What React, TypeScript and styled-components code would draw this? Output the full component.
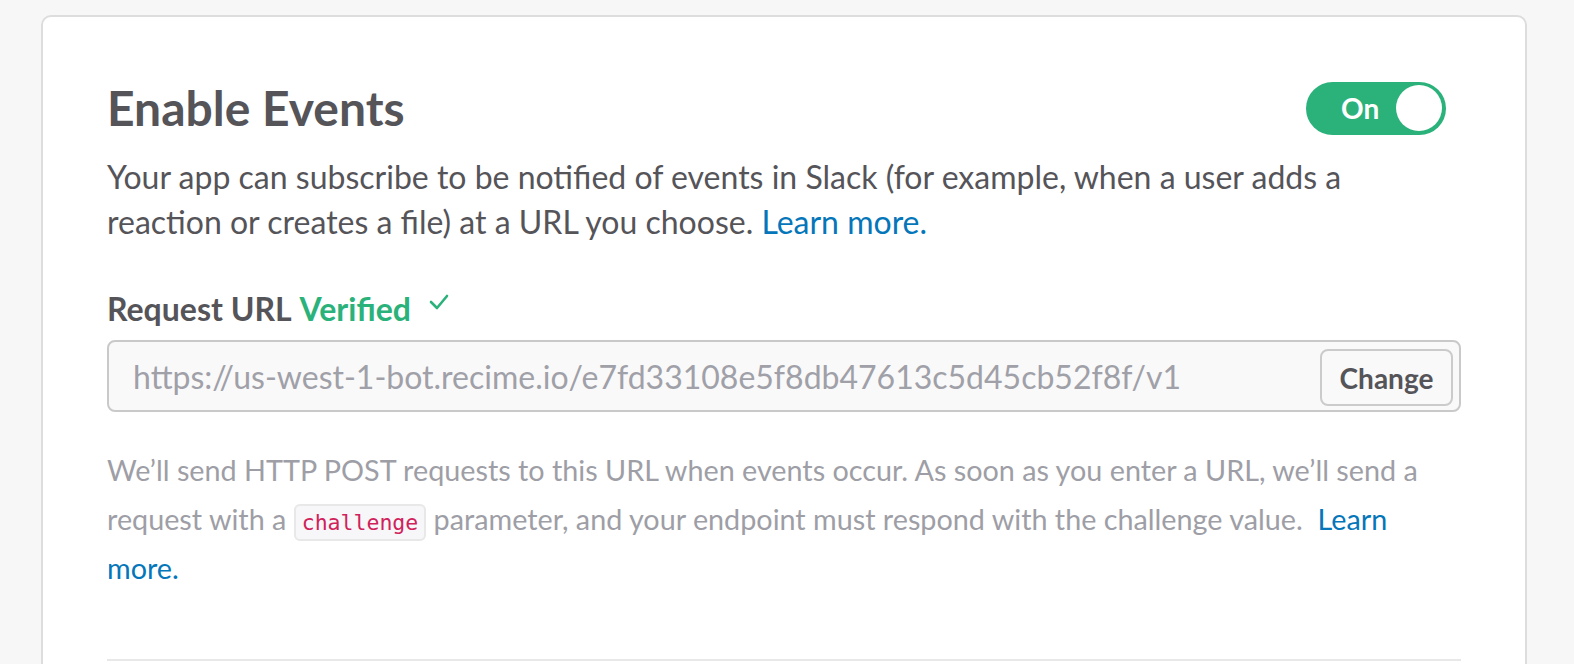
import React from "react";
import styled, { createGlobalStyle } from "styled-components";

const Global = createGlobalStyle`
  html, body { margin: 0; padding: 0; background: #f7f7f7; }
  body { font-family: Lato, "Open Sans", sans-serif; -webkit-font-smoothing: antialiased; }
  * { box-sizing: border-box; }
`;

const Page = styled.div`
  padding: 15px 47px 0 41px;
  height: 664px;
  overflow: hidden;
`;

const Card = styled.section`
  background: #ffffff;
  border: 2px solid #dddddd;
  border-radius: 10px;
  padding: 60px 64px 120px 64px;
`;

const HeaderRow = styled.div`
  display: flex;
  align-items: center;
  justify-content: space-between;
`;

const Title = styled.h2`
  margin: 0;
  font-size: 48px;
  line-height: 62px;
  font-weight: 700;
  color: #555459;
`;

const Toggle = styled.button`
  display: flex;
  align-items: center;
  justify-content: space-between;
  width: 140px;
  height: 53px;
  margin-right: 15px;
  padding: 0 4px 0 35px;
  border: none;
  border-radius: 27px;
  background: #2bb27b;
  color: #ffffff;
  font-family: Lato, sans-serif;
  font-weight: 700;
  font-size: 28px;
  cursor: pointer;
`;

const Knob = styled.span`
  width: 46px;
  height: 46px;
  border-radius: 50%;
  background: #ffffff;
`;

const Lead = styled.p`
  margin: 15px 0 0 0;
  max-width: 1290px;
  font-size: 32px;
  line-height: 45px;
  color: #555459;
`;

const Link = styled.a`
  color: #0576b9;
  text-decoration: none;
`;

const Label = styled.div`
  margin-top: 45px;
  display: flex;
  align-items: center;
  font-size: 32px;
  line-height: 40px;
  font-weight: 700;
  color: #555459;
`;

const Verified = styled.span`
  color: #2bb27b;
  margin-left: 8px;
`;

const Check = styled.svg`
  margin-left: 18px;
  margin-top: -14px;
  width: 20px;
  height: 16px;
`;

const UrlBox = styled.div`
  margin-top: 11px;
  display: flex;
  align-items: center;
  height: 72px;
  border: 2px solid #c9c9c9;
  border-radius: 8px;
  background: #f9f9f9;
  padding: 0 6px 0 24px;
`;

const UrlInput = styled.input`
  flex: 1;
  min-width: 0;
  border: none;
  background: transparent;
  outline: none;
  padding: 0;
  font-family: Lato, sans-serif;
  font-size: 32px;
  color: #a0a0a8;
`;

const ChangeButton = styled.button`
  height: 57px;
  width: 133px;
  margin-top: 3px;
  border: 2px solid #cbcbcb;
  border-radius: 8px;
  background: #f9f9f9;
  font-family: Lato, sans-serif;
  font-size: 28px;
  font-weight: 700;
  color: #555459;
  cursor: pointer;
`;

const Help = styled.p`
  margin: 34px 0 0 0;
  font-size: 28.75px;
  line-height: 49px;
  color: #9e9ea6;
`;

const Code = styled.code`
  font-family: "DejaVu Sans Mono", "Liberation Mono", monospace;
  font-size: 21.5px;
  line-height: 1;
  color: #d0225a;
  background: #f7f7f9;
  border: 2px solid #e8e8e8;
  border-radius: 6px;
  padding: 4px 6px;
`;

const Divider = styled.hr`
  margin: 66px 0 0 0;
  border: none;
  border-top: 2px solid #e8e8e8;
`;

export default function App() {
  return (
    <>
      <Global />
      <Page>
        <Card>
          <HeaderRow>
            <Title>Enable Events</Title>
            <Toggle role="switch" aria-checked="true">
              On
              <Knob />
            </Toggle>
          </HeaderRow>
          <Lead>
            Your app can subscribe to be notified of events in Slack (for example, when a user adds a
            reaction or creates a file) at a URL you choose. <Link href="#">Learn more.</Link>
          </Lead>
          <Label>
            Request URL<Verified>Verified</Verified>
            <Check viewBox="0 0 20 16">
              <polyline points="2,8 8,14 18,2" fill="none" stroke="#2bb27b" strokeWidth="2.6" strokeLinecap="round" strokeLinejoin="round" />
            </Check>
          </Label>
          <UrlBox>
            <UrlInput readOnly value="https://us-west-1-bot.recime.io/e7fd33108e5f8db47613c5d45cb52f8f/v1" />
            <ChangeButton>Change</ChangeButton>
          </UrlBox>
          <Help>
            We’ll send HTTP POST requests to this URL when events occur. As soon as you enter a URL, we’ll send a
            request with a <Code>challenge</Code> parameter, and your endpoint must respond with the challenge value.&nbsp;{" "}
            <Link href="#">Learn more.</Link>
          </Help>
          <Divider />
        </Card>
      </Page>
    </>
  );
}
